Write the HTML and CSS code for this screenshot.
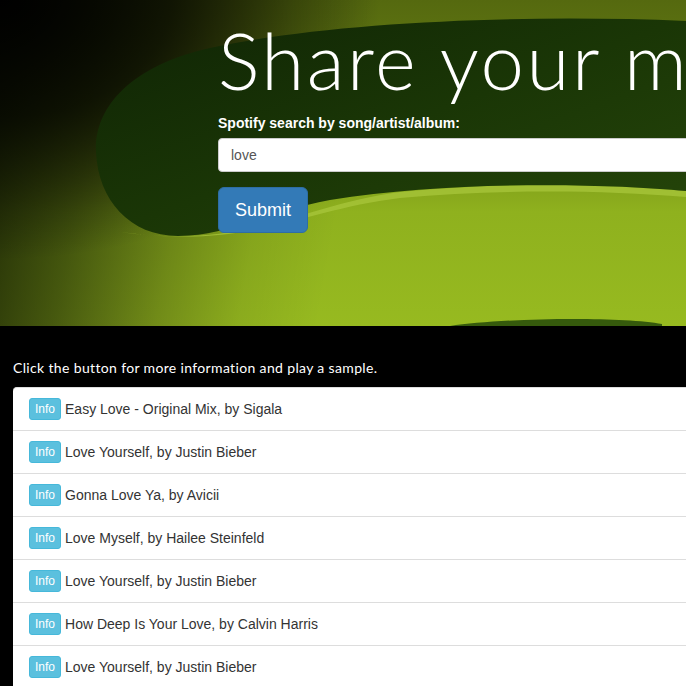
FILE: index.html
```html
<!DOCTYPE html>
<html>
<head>
<meta charset="utf-8">
<link rel="stylesheet" href="styles.css">
</head>
<body>
<header class="hero">
  <svg class="hero-bg" width="686" height="326" viewBox="0 0 686 326" aria-hidden="true">
    <defs>
      <linearGradient id="blob" x1="0" y1="0" x2="1" y2="1">
        <stop offset="0" stop-color="#0f2405"/>
        <stop offset="0.5" stop-color="#1a3606"/>
        <stop offset="1" stop-color="#26460a"/>
      </linearGradient>
    </defs>
    <path d="M 120 232 C 250 250 300 205 400 192 C 500 182 600 184 686 191 L 686 197 C 600 190 500 189 400 198 C 300 210 250 250 120 232 Z" fill="#a6c43a" opacity="0.8"/>
    <path d="M 686 21 C 520 14 330 22 210 48 C 130 66 94 108 96 152 C 98 200 130 236 178 236 C 228 236 262 213 330 200 C 450 181 600 183 686 191 Z" fill="url(#blob)"/>
    <path d="M 450 326 C 500 318 620 316 662 324 L 662 326 Z" fill="#355a0c"/>
  </svg>
  <div class="hero-inner">
    <h1 class="title">Share your music</h1>
    <form class="search">
      <label class="label" for="q">Spotify search by song/artist/album:</label>
      <input class="field" id="q" type="text" value="love">
      <button class="btn-submit" type="button">Submit</button>
    </form>
  </div>
</header>
<main class="results">
  <p class="hint">Click the button for more information and play a sample.</p>
  <ul class="list">
    <li class="item"><span class="info">Info</span>Easy Love - Original Mix, by Sigala</li>
    <li class="item"><span class="info">Info</span>Love Yourself, by Justin Bieber</li>
    <li class="item"><span class="info">Info</span>Gonna Love Ya, by Avicii</li>
    <li class="item"><span class="info">Info</span>Love Myself, by Hailee Steinfeld</li>
    <li class="item"><span class="info">Info</span>Love Yourself, by Justin Bieber</li>
    <li class="item"><span class="info">Info</span>How Deep Is Your Love, by Calvin Harris</li>
    <li class="item"><span class="info">Info</span>Love Yourself, by Justin Bieber</li>
  </ul>
</main>
</body>
</html>
```
FILE: styles.css
```css
html {
  overflow: hidden;
}
body {
  margin: 0;
  background: #000;
  font-family: "Liberation Sans", Arial, sans-serif;
  font-size: 14px;
  color: #333;
}
.hero {
  position: relative;
  height: 326px;
  overflow: hidden;
  background:
    radial-gradient(ellipse 380px 260px at 0 0, rgba(0,0,0,1) 0%, rgba(0,0,0,0.7) 45%, rgba(0,0,0,0) 100%),
    linear-gradient(100deg, rgba(5,10,0,0.82) 0px, rgba(5,10,0,0.55) 110px, rgba(0,0,0,0.25) 210px, rgba(0,0,0,0.08) 290px, rgba(0,0,0,0) 370px),
    linear-gradient(to bottom, #55690f 0%, #6a8414 35%, #8fb11e 65%, #97ba20 100%);
}
.hero-bg {
  position: absolute;
  left: 0;
  top: 0;
}
.hero-inner {
  position: relative;
  padding-left: 218px;
}
.title {
  margin: 0;
  padding-top: 18px;
  font-family: "Lato", sans-serif;
  font-weight: 300;
  font-size: 78px;
  line-height: 84px;
  color: #fff;
  white-space: nowrap;
  letter-spacing: 2.5px;
}
.search {
  display: flex;
  flex-direction: column;
  align-items: flex-start;
  margin-top: 11px;
}
.label {
  font-weight: bold;
  font-size: 14px;
  line-height: 20px;
  color: #fff;
  margin-bottom: 5px;
}
.field {
  box-sizing: border-box;
  width: 700px;
  height: 34px;
  padding: 6px 12px;
  border: 1px solid #ccc;
  border-radius: 4px;
  background: #fff;
  font-family: "Liberation Sans", Arial, sans-serif;
  font-size: 14px;
  color: #555;
  margin: 0;
}
.btn-submit {
  margin-top: 15px;
  box-sizing: border-box;
  height: 46px;
  padding: 10px 16px;
  border: 1px solid #2e6da4;
  border-radius: 6px;
  background: #337ab7;
  color: #fff;
  font-family: "Liberation Sans", Arial, sans-serif;
  font-size: 18px;
  line-height: 24px;
}
.results {
  padding: 0 0 0 13px;
}
.hint {
  margin: 0;
  padding-top: 32px;
  padding-bottom: 9px;
  font-family: "Lato", sans-serif;
  font-size: 14px;
  line-height: 20px;
  letter-spacing: 0.35px;
  color: #fff;
}
.list {
  list-style: none;
  margin: 0;
  padding: 0;
  width: 900px;
  background: #fff;
  border-top: 1px solid #ddd;
  border-radius: 4px 0 0 0;
}
.item {
  display: flex;
  align-items: center;
  height: 42px;
  padding: 0 16px;
  border-bottom: 1px solid #ddd;
  font-size: 14px;
  color: #333;
}
.info {
  box-sizing: border-box;
  height: 22px;
  padding: 1px 5px;
  margin-right: 4px;
  border: 1px solid #46b8da;
  border-radius: 3px;
  background: #5bc0de;
  color: #fff;
  font-size: 12px;
  line-height: 18px;
}
```
